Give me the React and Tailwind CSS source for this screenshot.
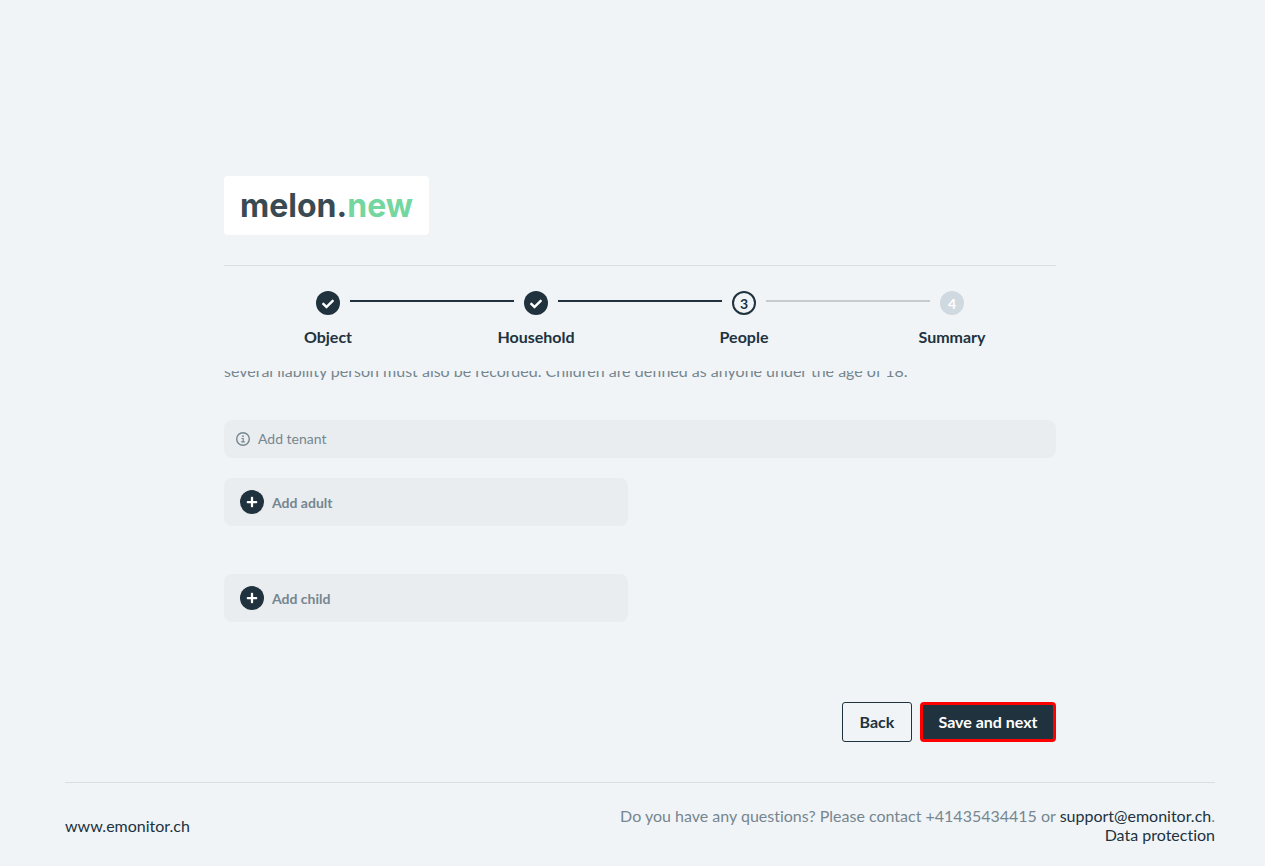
import { FaCheck, FaPlus } from "react-icons/fa";

const steps = [
  { label: "Object", state: "done", before: "bg-transparent", after: "bg-[#20323e]" },
  { label: "Household", state: "done", before: "bg-[#20323e]", after: "bg-[#20323e]" },
  { label: "People", state: "current", before: "bg-[#20323e]", after: "bg-[#c8cbcc]" },
  { label: "Summary", state: "upcoming", before: "bg-[#c8cbcc]", after: "bg-transparent" },
];

const badgeStyles = {
  done: "bg-[#20323e] text-white",
  current: "border-2 border-[#20323e] text-[#20323e]",
  upcoming: "bg-[#d0d9df] text-white",
};

function Logo() {
  return (
    <a
      href="#home"
      className="flex h-[59px] w-[205px] items-center justify-center rounded-sm bg-white font-['Inter',sans-serif] text-[32px] leading-10 font-bold text-[#3a4a52]"
    >
      melon.<span className="text-[#74d79f]">new</span>
    </a>
  );
}

function Stepper() {
  return (
    <ol className="flex border-t border-[#d8dfe2] pt-[25px] pb-[22px]">
      {steps.map((step, index) => (
        <li key={step.label} className="flex flex-1 flex-col items-center gap-[10px]">
          <div className="flex w-full items-start gap-[10px]">
            <span className={`mt-[9px] h-0.5 flex-1 ${step.before}`} />
            <span
              className={`flex size-6 items-center justify-center rounded-full pt-px text-sm font-bold ${badgeStyles[step.state]}`}
            >
              {step.state === "done" ? <FaCheck size={12} /> : index + 1}
            </span>
            <span className={`mt-[9px] h-0.5 flex-1 ${step.after}`} />
          </div>
          <span className="font-bold">{step.label}</span>
        </li>
      ))}
    </ol>
  );
}

function InfoIcon() {
  return (
    <svg viewBox="0 0 14 14" className="size-[14px]" fill="none" stroke="currentColor" aria-hidden="true">
      <circle cx="7" cy="7" r="6.3" strokeWidth="1.4" />
      <circle cx="7" cy="4.2" r="0.9" fill="currentColor" stroke="none" />
      <path d="M5.5 6.5h1.7v3.3M5.2 9.9h3.6" strokeWidth="1.2" />
    </svg>
  );
}

function AddButton({ children }) {
  return (
    <button
      type="button"
      className="flex h-12 w-full items-center gap-2 rounded-lg bg-[#e9edf0] px-4 text-sm font-bold text-[#76868f]"
    >
      <span className="flex size-6 items-center justify-center rounded-full bg-[#20323e] text-white">
        <FaPlus size={12} />
      </span>
      <span className="pt-px">{children}</span>
    </button>
  );
}

export default function App() {
  return (
    <div className="flex min-h-screen flex-col bg-[#f0f4f7] pl-[15px] font-['Lato',sans-serif] text-base text-[#20323e] [font-variant-ligatures:none]">
      <div className="mx-auto w-full max-w-[832px] pt-[176px]">
        <header className="flex flex-col gap-[30px]">
          <Logo />
          <Stepper />
        </header>
        <main>
          <div className="overflow-hidden">
            <p className="-mt-3 text-[#76868f]">
              several liability person must also be recorded. Children are defined as anyone under the age of 18.
            </p>
          </div>
          <div className="mt-[37px] flex h-[38px] items-center gap-2 rounded-lg bg-[#e9edf0] px-3 text-sm text-[#76868f]">
            <InfoIcon />
            Add tenant
          </div>
          <div className="mt-5 grid grid-cols-2 gap-x-6">
            <div className="col-start-1 flex w-full flex-col gap-12">
              <AddButton>Add adult</AddButton>
              <AddButton>Add child</AddButton>
            </div>
          </div>
          <div className="mt-20 flex justify-end gap-2">
            <button type="button" className="h-10 w-[70px] rounded-[3px] border border-[#20323e] font-bold">
              Back
            </button>
            <button
              type="button"
              className="h-10 w-[136px] rounded-sm border-3 border-[#ff0000] bg-[#20323e] font-bold text-white"
            >
              Save and next
            </button>
          </div>
        </main>
      </div>
      <footer className="mt-10 px-[50px]">
        <div className="flex items-center justify-between border-t border-[#d8dfe2] pt-[23px] leading-[19px]">
          <a href="#emonitor">www.emonitor.ch</a>
          <div className="text-right text-[#76868f]">
            <p>
              Do you have any questions? Please contact +41435434415 or{" "}
              <a href="mailto:support@emonitor.ch" className="text-[#20323e]">
                support@emonitor.ch
              </a>
              .
            </p>
            <a href="#data-protection" className="text-[#20323e]">
              Data protection
            </a>
          </div>
        </div>
      </footer>
    </div>
  );
}
